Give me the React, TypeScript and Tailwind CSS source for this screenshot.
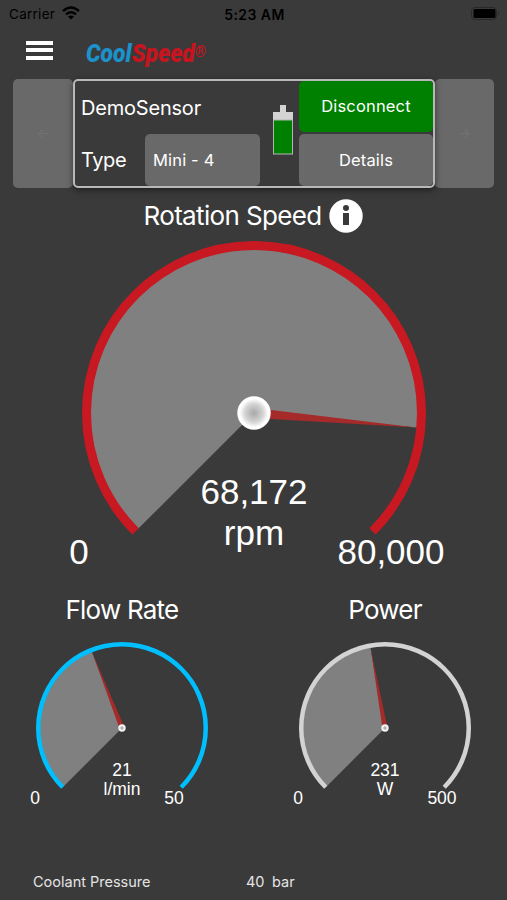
import React from "react";

const SANS = "font-[Inter,'Liberation_Sans',sans-serif]";

type GaugeProps = {
  size: number;
  height: number;
  stroke: number;
  color: string;
  fraction: number;
  fontSize: number;
  value: string;
  unit: string;
  min: string;
  max: string;
  hub: number;
  needle: number;
  needleWidth: number;
  valueY: number;
  unitY: number;
  limitY: number;
  minX: number;
  maxX: number;
};

function Gauge(p: GaugeProps) {
  const c = p.size / 2;
  const r = c - p.stroke / 2;
  const inner = c - p.stroke + 0.5;
  const at = (fraction: number, radius: number) => {
    const a = ((135 + 270 * fraction) * Math.PI) / 180;
    return [c + radius * Math.cos(a), c + radius * Math.sin(a)];
  };
  const [sx, sy] = at(0, r);
  const [ex, ey] = at(1, r);
  const [fx, fy] = at(0, inner);
  const [vx, vy] = at(p.fraction, inner);
  const angle = 135 + 270 * p.fraction;
  const large = p.fraction * 270 > 180 ? 1 : 0;
  const id = `hub-${p.unit.replace("/", "")}`;
  return (
    <svg width={p.size} height={p.height} className="block shrink-0 overflow-visible font-['Liberation_Sans',Arial,sans-serif]" fill="white" fontSize={p.fontSize} textAnchor="middle">
      <defs>
        <radialGradient id={id}>
          <stop offset="0" stopColor="#a8a8a8" />
          <stop offset="0.55" stopColor="#d4d4d4" />
          <stop offset="0.85" stopColor="#fff" />
        </radialGradient>
      </defs>
      <path d={`M${c} ${c}L${fx} ${fy}A${inner} ${inner} 0 ${large} 1 ${vx} ${vy}Z`} fill="#808080" />
      <path d={`M${sx} ${sy}A${r} ${r} 0 1 1 ${ex} ${ey}`} fill="none" stroke={p.color} strokeWidth={p.stroke} />
      <path d={`M0 ${-p.needleWidth}L${p.needle} 0L0 ${p.needleWidth}Z`} transform={`translate(${c} ${c}) rotate(${angle})`} fill="#a52a2a" />
      {p.hub > 10 ? (
        <circle cx={c} cy={c} r={p.hub} fill={`url(#${id})`} />
      ) : (
        <circle cx={c} cy={c} r={p.hub - 1} fill="#b0b0b0" stroke="#f4f4f4" strokeWidth="2" />
      )}
      <text x={c} y={p.valueY}>{p.value}</text>
      <text x={c} y={p.unitY}>{p.unit}</text>
      <text x={p.minX} y={p.limitY}>{p.min}</text>
      <text x={p.maxX} y={p.limitY}>{p.max}</text>
    </svg>
  );
}

function StatusBar() {
  return (
    <div className="flex h-7 items-center justify-between pr-[7px] pl-[9px] text-black">
      <div className="flex w-40 items-center gap-[7px]">
        <span className="text-[13.5px] tracking-[0.02em]">Carrier</span>
        <svg width="18" height="14" viewBox="0 0 18 14" fill="none" stroke="black" strokeWidth="2.4" className="-mt-0.5">
          <path d="M1 5.2Q9-2 17 5.2M4 8.3Q9 4 14 8.3" />
          <path d="M6 10.6Q9 8.4 12 10.6L9 13.6Z" fill="black" stroke="none" />
        </svg>
      </div>
      <span className="text-[14px] font-semibold tracking-[0.03em]">5:23 AM</span>
      <div className="flex w-40 justify-end">
        <svg width="30" height="14" viewBox="0 0 30 14">
          <rect x="1.5" y="0.5" width="25" height="12" rx="3.5" fill="none" stroke="#292929" />
          <rect x="3.5" y="2" width="22" height="9" rx="1.5" fill="black" />
          <path d="M28 4.5Q30 6.5 28 8.5Z" fill="#292929" />
        </svg>
      </div>
    </div>
  );
}

function Header() {
  return (
    <div className="flex h-[51px] items-start pt-3 pl-[26px]">
      <div className="mt-[0.5px] flex w-[27px] flex-col gap-[3.5px]">
        <span className="h-1 bg-white" />
        <span className="h-1 bg-white" />
        <span className="h-1 bg-white" />
      </div>
      <svg width="126" height="32" className="ml-[33px] font-[Roboto,sans-serif]" fontWeight="900" fontStyle="italic">
        <text x="0" y="21.5" fontSize="25" textLength="120" lengthAdjust="spacingAndGlyphs">
          <tspan fill="#1b92cc">Cool</tspan>
          <tspan fill="#c8141e">Speed</tspan>
          <tspan fill="#c8141e" fontSize="16" dy="-4.5">®</tspan>
        </text>
      </svg>
    </div>
  );
}

function SensorPanel() {
  return (
    <div className="flex h-[109px] px-[13px] text-white">
      <div className="flex w-[60px] items-center justify-center rounded-[5px] bg-[#696969] text-[13px] text-[#727272]">←</div>
      <div className="z-10 flex w-[362px] rounded-[5px] border-2 border-[#b8b8b8] bg-[#3a3a3a] pl-1.5 shadow-[0_2px_6px_rgba(0,0,0,0.5)]">
        <div className="flex w-[179px] flex-col">
          <div className="flex h-[53px] items-center text-[20px] tracking-[-0.01em]">DemoSensor</div>
          <div className="flex h-[52px] items-center">
            <span className="w-[64px] text-[20px] tracking-[-0.02em]">Type</span>
            <div className="flex h-[52px] w-[115px] items-center rounded-[5px] bg-[#696969] pl-2 text-[16.5px] tracking-[0.01em]">Mini - 4</div>
          </div>
        </div>
        <svg width="20" height="50" className="mt-6 ml-[13px]">
          <path d="M7 0h6v7h7v8H0V7h7Z" fill="#d3d3d3" />
          <rect x="0.5" y="15" width="19" height="34" fill="#008000" stroke="#b5b5b5" />
        </svg>
        <div className="ml-auto flex w-[134px] flex-col gap-0.5">
          <div className="flex h-[51px] items-center justify-center rounded-[5px] bg-[#008000] text-[16.5px] tracking-[0.01em]">Disconnect</div>
          <div className="flex h-[52px] items-center justify-center rounded-[5px] bg-[#696969] text-[16.5px] tracking-[0.01em]">Details</div>
        </div>
      </div>
      <div className="flex w-[59px] items-center justify-center rounded-[5px] bg-[#696969] text-[13px] text-[#727272]">→</div>
    </div>
  );
}

export default function App() {
  return (
    <div className={`flex h-[900px] w-[507px] flex-col overflow-hidden bg-[#3a3a3a] ${SANS}`}>
      <StatusBar />
      <Header />
      <SensorPanel />
      <div className="flex h-[53px] items-center justify-center gap-2 pt-0.5 text-white">
        <h1 className="text-[26px] tracking-[-0.025em] whitespace-nowrap">Rotation Speed</h1>
        <svg width="34" height="34">
          <circle cx="17" cy="17" r="16.7" fill="white" />
          <circle cx="17" cy="9" r="3" fill="#3a3a3a" />
          <path d="M14 14h6v12h-6z" fill="#3a3a3a" />
        </svg>
      </div>
      <div className="flex h-[344px] justify-center">
        <Gauge size={344} height={344} stroke={9} color="#c81922" fraction={0.85215} fontSize={35} value="68,172" unit="rpm" min="0" max="80,000" hub={16.7} needle={163} needleWidth={5} valueY={263} unitY={304} limitY={323} minX={-3} maxX={309} />
      </div>
      <div className="flex pl-[36px] text-white">
        <div className="flex w-[172px] flex-col items-center">
          <h2 className="flex h-[57px] items-center pb-2 text-[26px] tracking-[-0.03em] whitespace-nowrap">Flow Rate</h2>
          <Gauge size={172} height={172} stroke={4.5} color="#00bfff" fraction={0.42} fontSize={17.5} value="21" unit="l/min" min="0" max="50" hub={3.7} needle={80} needleWidth={2.5} valueY={134} unitY={153} limitY={162} minX={-1} maxX={138} />
        </div>
        <div className="ml-[91px] flex w-[172px] flex-col items-center">
          <h2 className="flex h-[57px] items-center pb-2 text-[26px] tracking-[-0.03em] whitespace-nowrap">Power</h2>
          <Gauge size={172} height={172} stroke={4.5} color="#d3d3d3" fraction={0.462} fontSize={17.5} value="231" unit="W" min="0" max="500" hub={3.7} needle={80} needleWidth={2.5} valueY={134} unitY={153} limitY={162} minX={-1} maxX={143} />
        </div>
      </div>
      <div className="mt-auto flex h-[37px] items-center pl-[33px] text-[14.5px] text-[#e4e4e4]">
        <span className="w-[213px]">Coolant Pressure</span>
        <span className="w-[26px]">40</span>
        <span>bar</span>
      </div>
    </div>
  );
}
